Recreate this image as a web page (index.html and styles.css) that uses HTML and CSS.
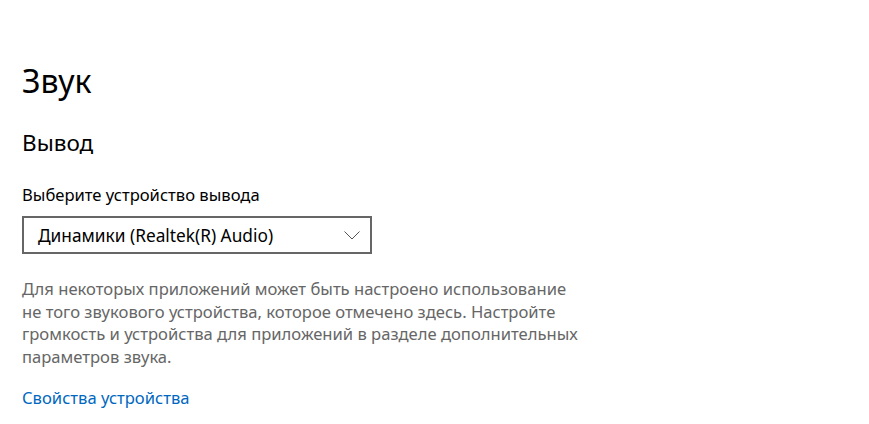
FILE: index.html
```html
<!DOCTYPE html>
<html>
<head>
    <meta charset="utf-8">
    <title>Звук</title>
    <link rel="stylesheet" href="styles.css">
</head>
<body>
    <div class="page">
        <h1 class="page-title">Звук</h1>
        <h2 class="section-title">Вывод</h2>

        <div class="field">
            <label class="field-label" for="outputDevice">Выберите устройство вывода</label>
            <div class="select" id="outputDevice">
                <span class="select-value">Динамики (Realtek(R) Audio)</span>
                <svg class="select-chevron" width="16" height="9" viewBox="0 0 16 9">
                    <path d="M0.5 0.5 L8 8 L15.5 0.5" fill="none" stroke="#555" stroke-width="1"/>
                </svg>
            </div>
        </div>

        <p class="hint">Для некоторых приложений может быть настроено использование не того звукового устройства, которое отмечено здесь. Настройте громкость и устройства для приложений в разделе дополнительных параметров звука.</p>

        <a class="link" href="#">Свойства устройства</a>
    </div>
</body>
</html>
```

FILE: styles.css
```css
body {
    margin: 0;
    background: #fff;
    color: #000;
    font-family: "Noto Sans", "Open Sans", sans-serif;
}

.page {
    padding: 57px 0 0 22px;
}

.page-title {
    margin: 0;
    font-size: 32px;
    font-weight: 400;
    line-height: 48px;
}

.section-title {
    margin: 23px 0 0;
    font-size: 22.5px;
    font-weight: 400;
    line-height: 30px;
}

.field {
    margin-top: 26px;
}

.field-label {
    display: block;
    font-size: 16.6px;
    line-height: 22px;
}

.select {
    margin-top: 10px;
    height: 34px;
    width: 322px;
    border: 2px solid #666;
    display: flex;
    align-items: center;
    justify-content: space-between;
    padding: 0 10px 0 14px;
}

.select-value {
    font-size: 17.3px;
}

.select-chevron {
    display: block;
}

.hint {
    margin: 24px 0 0;
    width: 556px;
    font-size: 16.6px;
    line-height: 22.7px;
    color: #666;
}

.link {
    display: inline-block;
    margin-top: 17px;
    font-size: 16.6px;
    color: #0067c0;
    text-decoration: none;
}
```
